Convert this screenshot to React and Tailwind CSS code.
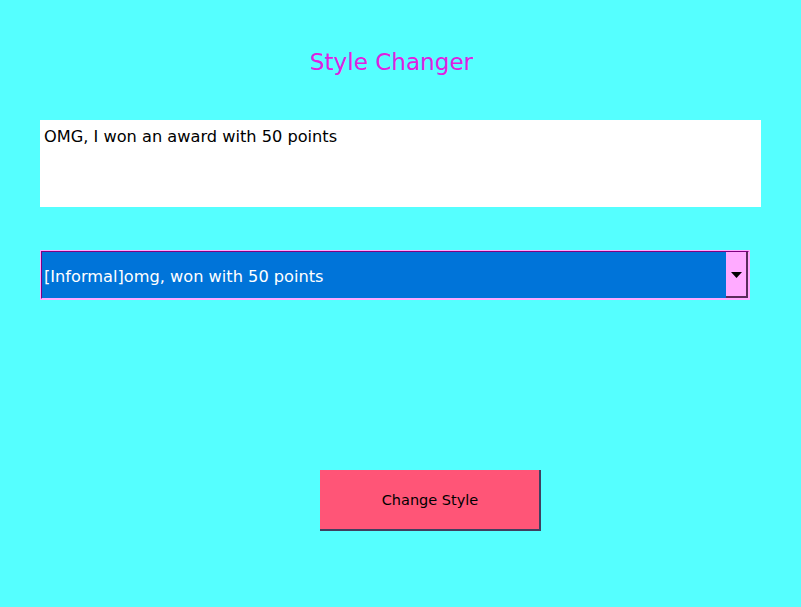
export default function App() {
  const font = { fontFamily: '"DejaVu Sans", "Noto Sans", sans-serif' };
  return (
    <div className="w-[801px] h-[607px] bg-[#55ffff] flex flex-col" style={font}>
      <div className="h-[120px] flex justify-center pt-[47px]">
        <h1 className="text-[23.1px] leading-[30px] text-[#e020e0] ml-[-18px]">Style Changer</h1>
      </div>
      <div className="ml-[40px] w-[721px] h-[87px] bg-white px-[4px] pt-[6px] text-[16.2px] leading-[22px] text-black">
        OMG, I won an award with 50 points
      </div>
      <div className="ml-[40px] mt-[43px] w-[710px] h-[50px] border border-[#ffaaff] bg-[#ffaaff]">
        <div className="h-full flex border border-[#800080] border-r-[#ffaaff] border-b-[#ffaaff]">
          <div className="flex-1 bg-[#0074d9] flex items-center px-[2px] pt-[3px] text-white text-[16.2px] leading-[22px]">
            [Informal]omg, won with 50 points
          </div>
          <div className="w-[22px] bg-[#ffaaff] border-r-2 border-b-2 border-[#5a2a5a] flex items-center justify-center pt-[2px]">
            <svg width="11" height="6" viewBox="0 0 11 6"><polygon points="0,0 11,0 5.5,6" fill="#000" /></svg>
          </div>
        </div>
      </div>
      <div className="flex justify-center mt-[170px] pl-[59px]">
        <button className="w-[221px] h-[61px] bg-[#ff5577] border-r-2 border-b-2 border-[#404060] text-[14.5px] text-black flex items-center justify-center pt-[3px] pl-[2px]">
          Change Style
        </button>
      </div>
    </div>
  );
}
